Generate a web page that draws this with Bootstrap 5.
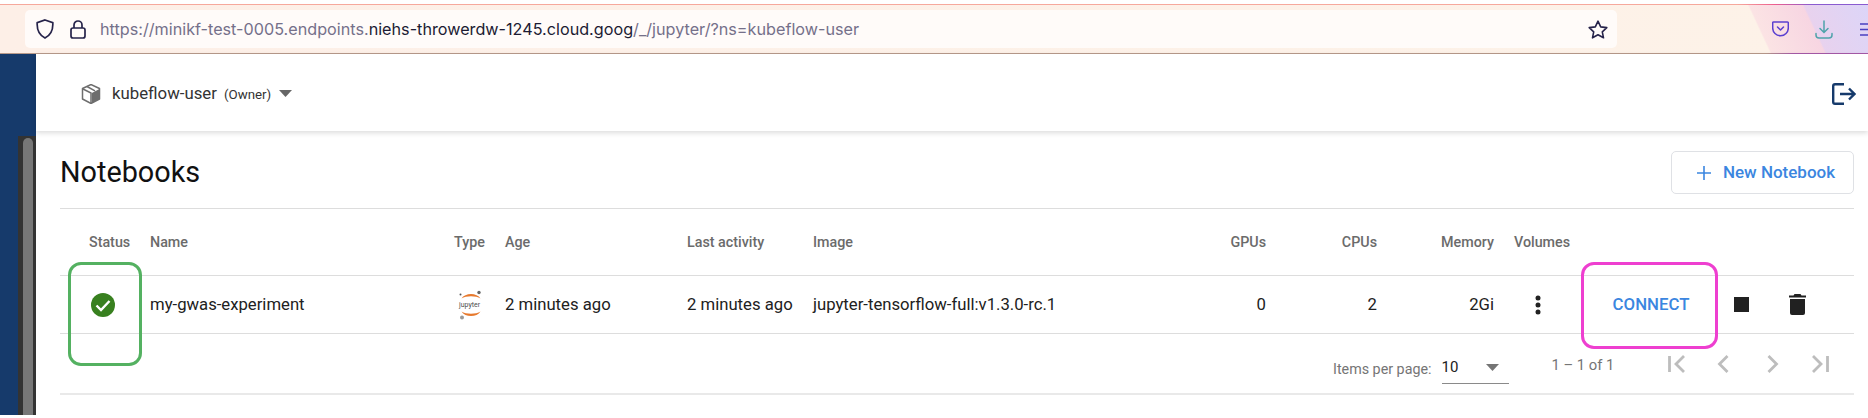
<!DOCTYPE html>
<html lang="en">
<head>
    <meta charset="UTF-8">
    <title>Notebooks</title>
    <link href="https://cdn.jsdelivr.net/npm/bootstrap@5.3.3/dist/css/bootstrap.min.css" rel="stylesheet">
    <style>
        html, body { height: 418px; overflow: hidden; background: #fff; }
        body { font-family: Roboto, "Liberation Sans", sans-serif; color: #212121; }
        .page-wrap { position: relative; width: 1868px; height: 418px; padding: 4px 0 3px; }

        /* browser chrome */
        .browser-bar {
            height: 50px; padding: 5px 0 5px 25px;
            background:
                linear-gradient(90deg, #f6a89c 0, #f6a89c 93%, #ee5f8f 95%, #8a5bd0 97%, #8a5bd0 100%) top / 100% 1px no-repeat,
                linear-gradient(90deg, #b89a8b 0, #b89a8b 94.5%, #a65aa8 96%, #a65aa8 100%) bottom / 100% 1px no-repeat,
                linear-gradient(65deg, transparent 0, transparent 96.5%, #e8d2ee 96.6%, #dcd5f8 100%),
                linear-gradient(65deg, transparent 0, transparent 93.6%, #fbe3e4 93.7%, #f7d5e2 96.6%),
                linear-gradient(90deg, #fdefe7 0, #fdf2e8 100%);
        }
        .url-box { width: 1592px; height: 38px; background: #fffbf9; border-radius: 5px; padding: 0 9px 0 11px; }
        .url-text { font-family: Inter, "Noto Sans", sans-serif; font-size: 16.2px; color: #75708a; margin-left: 14px; white-space: nowrap; }
        .url-text b { font-weight: 400; color: #1c1b33; }
        .chrome-icons { margin-left: 155px; gap: 26px; }
        .menu-icon { margin-left: 1px; }

        /* sidebar + main */
        .app-body { height: 361px; }
        .side-rail { width: 36px; flex: none; background: #163a6b; padding: 82px 0 0 18px; }
        .side-scroll { height: 100%; background: #333; padding: 2px 3px 0 5px; }
        .side-thumb { height: 100%; background: #777; border-radius: 5px 5px 0 0; }
        .main-col { flex: 1 1 auto; min-width: 0; }

        .top-head { height: 77px; padding: 2px 12px 0 45px; box-shadow: 0 2px 5px rgba(0,0,0,.14); position: relative; }
        .ns-name { font-size: 16.8px; color: #333; margin-left: 11px; }
        .ns-role { font-size: 13.3px; color: #333; margin-left: 7px; margin-top: 2px; }

        .content-area { padding: 0 14px 0 24px; }
        .title-row { height: 78px; padding-top: 6px; border-bottom: 1px solid #ddd; }
        .title-row h1 { font-family: Roboto, sans-serif; font-size: 28.8px; font-weight: 400; color: #111; margin: 0; }
        .new-btn { width: 183px; height: 43px; font-size: 17px; font-weight: 500; color: #3b86e0; border: 1px solid #dfe1e5; border-radius: 5px; background: #fff; gap: 12px; padding: 0 0 0 7px; }

        .nb-table { table-layout: fixed; width: 1794px; margin: 0; }
        .nb-table th, .nb-table td { padding: 0; border-bottom: 1px solid #ddd; vertical-align: middle; box-shadow: none; white-space: nowrap; }
        .nb-table th { height: 66px; padding-top: 2px; font-size: 14.3px; font-weight: 500; color: #6b6b6b; }
        .nb-table td { height: 58px; padding-top: 1px; font-size: 16.7px; color: #212121; }
        .c-status { width: 90px; } .c-name { width: 304px; } .c-type { width: 51px; } .c-age { width: 182px; }
        .c-last { width: 126px; } .c-image { width: 401px; } .c-gpu { width: 52px; } .c-cpu { width: 111px; }
        .c-mem { width: 117px; } .c-vol { width: 90px; }
        .status-head { padding-left: 29px !important; }
        .status-cell { padding-left: 31px !important; }
        .vol-head { padding-left: 20px !important; }
        .vol-cell { padding-left: 41px !important; }
        .connect-btn { width: 134px; margin-left: 0; padding: 0; border: 0; font-size: 16.8px; font-weight: 500; color: #3b86e0; background: none; }
        .act-stop { margin-left: 16px; }
        .act-trash { margin-left: 40px; }

        .pager-row { height: 61px; border-bottom: 2px solid #e9e9e9; padding-bottom: 0; }
        .per-label { font-size: 14.3px; color: #757575; margin-left: 1273px; margin-top: 13px; }
        .per-select { width: 67px; height: 32px; margin-left: 10px; margin-top: 9px; border-bottom: 1px solid #8a8a8a; font-size: 15px; color: #212121; padding: 0 10px 0 0; }
        .range-text { font-size: 14.8px; color: #757575; margin-left: 43px; width: 116px; margin-top: 4px; }
        .pager-btn { width: 18px; height: 20px; padding: 0; border: 0; background: none; display: flex; margin-top: 2px; }
        .pg-2 { margin-left: 31px; } .pg-3 { margin-left: 31px; } .pg-4 { margin-left: 27px; }

        /* hand drawn annotation boxes */
        .note-box { position: absolute; border-style: solid; border-width: 3px; border-radius: 13px; pointer-events: none; }
        .note-green { left: 68px; top: 262px; width: 74px; height: 104px; border-color: #54b161; }
        .note-pink { left: 1581px; top: 262px; width: 137px; height: 87px; border-color: #ee3fd0; }
        .jup-text { font-family: Roboto, sans-serif; font-size: 7px; fill: #4e4e4e; }
    </style>
</head>
<body>
<div class="page-wrap">

    <!-- browser toolbar -->
    <div class="browser-bar d-flex align-items-center">
        <div class="url-box d-flex align-items-center flex-shrink-0">
            <svg width="18" height="20" viewBox="0 0 18 20" fill="none" stroke="#26234a" stroke-width="1.7"><path d="M9 1 16.8 3.6C17.2 10 15 16 9 19 3 16 .8 10 1.2 3.6Z"/></svg>
            <svg class="ms-3" width="16" height="19" viewBox="0 0 16 19" fill="none" stroke="#26234a" stroke-width="1.7"><rect x="1" y="8" width="14" height="10" rx="2"/><path d="M4 8V5a4 4 0 0 1 8 0v3"/></svg>
            <span class="url-text">https://minikf-test-0005.endpoints.<b>niehs-throwerdw-1245.cloud.goog</b>/_/jupyter/?ns=kubeflow-user</span>
            <svg class="ms-auto" width="20" height="19" viewBox="0 0 20 19" fill="none" stroke="#26234a" stroke-width="1.6" stroke-linejoin="round"><path d="M10 1.2 12.7 6.9 18.8 7.6 14.3 11.8 15.5 17.8 10 14.8 4.5 17.8 5.7 11.8 1.2 7.6 7.3 6.9Z"/></svg>
        </div>
        <div class="chrome-icons d-flex align-items-center flex-shrink-0">
            <svg width="17" height="16" viewBox="0 0 17 16" fill="none" stroke="#5b3fd0" stroke-width="1.5" stroke-linecap="round" stroke-linejoin="round"><path d="M1.5 1h14a.8.8 0 0 1 .8.8V7a7.8 7.8 0 0 1-15.6 0V1.800a.8.8 0 0 1 .8-.8Z"/><path d="M5.500 6 8.500 9 11.500 6"/></svg>
            <svg width="18" height="19" viewBox="0 0 18 19" fill="none" stroke="#4fa3ab" stroke-width="1.500" stroke-linecap="round"><path d="M9 1v11M5 8.500 9 12.500 13 8.500"/><path d="M1 13.500V15a3 3 0 0 0 3 3h10a3 3 0 0 0 3-3v-1.500" /></svg>
            <svg class="menu-icon" width="8" height="13" viewBox="0 0 8 13" stroke="#4a3fc0" stroke-width="1.600"><path d="M0 1h8M0 6.500h8M0 12h8"/></svg>
        </div>
    </div>

    <div class="app-body d-flex">
        <div class="side-rail"><div class="side-scroll"><div class="side-thumb"></div></div></div>

        <div class="main-col">
            <!-- namespace header -->
            <div class="top-head d-flex align-items-center">
                <svg width="20" height="20" viewBox="0 0 20 20"><path d="M10 .5 18.500 4.500V15L10 19.500 1.500 15V4.500Z" fill="#fff" stroke="#6e6e6e" stroke-width="1.500" stroke-linejoin="round"/><path d="M10.800 9 18.500 5V15L10.800 19Z" fill="#6e6e6e"/><path d="M2 5 10 9V19M6 2.500 14 6.800" fill="none" stroke="#6e6e6e" stroke-width="1.500"/></svg>
                <span class="ns-name">kubeflow-user</span>
                <span class="ns-role">(Owner)</span>
                <svg class="ms-2" width="13" height="7" viewBox="0 0 13 7"><path d="M0 0h13L6.500 7Z" fill="#666"/></svg>
                <svg class="ms-auto" width="24" height="22" viewBox="0 0 24 22" fill="none" stroke="#163a6b" stroke-width="2.400"><path d="M12 1.200H3a1.800 1.800 0 0 0-1.800 1.800V19A1.800 1.800 0 0 0 3 20.800h9"/><path d="M8 11h15M17 5.500 22.500 11 17 16.500"/></svg>
            </div>

            <div class="content-area">
                <div class="title-row d-flex align-items-center justify-content-between">
                    <h1>Notebooks</h1>
                    <button class="btn new-btn d-flex align-items-center justify-content-center" type="button">
                        <svg width="14" height="14" viewBox="0 0 14 14" stroke="#3b86e0" stroke-width="1.600"><path d="M7 0v14M0 7h14"/></svg>
                        New Notebook
                    </button>
                </div>

                <table class="table nb-table">
                    <colgroup>
                        <col class="c-status"><col class="c-name"><col class="c-type"><col class="c-age"><col class="c-last">
                        <col class="c-image"><col class="c-gpu"><col class="c-cpu"><col class="c-mem"><col class="c-vol"><col>
                    </colgroup>
                    <thead>
                        <tr>
                            <th class="status-head">Status</th><th>Name</th><th>Type</th><th>Age</th><th>Last activity</th><th>Image</th>
                            <th class="text-end">GPUs</th><th class="text-end">CPUs</th><th class="text-end">Memory</th><th class="vol-head">Volumes</th><th></th>
                        </tr>
                    </thead>
                    <tbody>
                        <tr>
                            <td class="status-cell">
                                <svg class="d-block" width="24" height="24" viewBox="0 0 24 24"><circle cx="12" cy="12" r="12" fill="#38801f"/><path d="M5.500 12.500 10 17 18.500 8" fill="none" stroke="#fff" stroke-width="2.400"/></svg>
                            </td>
                            <td>my-gwas-experiment</td>
                            <td>
                                <svg class="d-block ms-1" width="26" height="30" viewBox="0 0 26 30">
                                    <path d="M3.500 8.500C7 2.500 19 2.500 22.500 8.500 18 5.500 8 5.500 3.500 8.500Z" fill="#e7792d"/>
                                    <path d="M3.500 21.500C7 27.500 19 27.500 22.500 21.500 18 24.500 8 24.500 3.500 21.500Z" fill="#e7792d"/>
                                    <text class="jup-text" x="1" y="17">jupyter</text>
                                    <circle cx="21" cy="2.500" r="1.700" fill="#666"/><circle cx="2.500" cy="4.500" r="1" fill="#555"/><circle cx="4" cy="27.500" r="2" fill="#999"/>
                                </svg>
                            </td>
                            <td>2 minutes ago</td><td>2 minutes ago</td><td>jupyter-tensorflow-full:v1.3.0-rc.1</td>
                            <td class="text-end">0</td><td class="text-end">2</td><td class="text-end">2Gi</td>
                            <td class="vol-cell"><svg class="d-block" width="6" height="20" viewBox="0 0 6 20" fill="#222"><circle cx="3" cy="3" r="2.500"/><circle cx="3" cy="10" r="2.500"/><circle cx="3" cy="17" r="2.500"/></svg></td>
                            <td>
                                <div class="d-flex align-items-center">
                                    <button class="btn connect-btn" type="button">CONNECT</button>
                                    <svg class="act-stop" width="15" height="15" viewBox="0 0 15 15"><rect width="15" height="15" fill="#212121"/></svg>
                                    <svg class="act-trash" width="17" height="21" viewBox="0 0 17 21" fill="#212121"><path d="M5.500 0h6l1 1.500H17V3.500H0V1.500H4.500Z"/><path d="M1 5h15V19a2 2 0 0 1-2 2H3a2 2 0 0 1-2-2Z"/></svg>
                                </div>
                            </td>
                        </tr>
                    </tbody>
                </table>

                <div class="pager-row d-flex align-items-center">
                    <span class="per-label">Items per page:</span>
                    <div class="per-select d-flex align-items-center justify-content-between">
                        <span>10</span>
                        <svg width="13" height="7" viewBox="0 0 13 7"><path d="M0 0h13L6.500 7Z" fill="#757575"/></svg>
                    </div>
                    <span class="range-text">1 – 1 of 1</span>
                    <button class="pager-btn" type="button"><svg width="18" height="20" viewBox="0 0 18 20" fill="none" stroke="#bdbdbd" stroke-width="2.800"><path d="M1.500 2v16M16 2 8 10 16 18"/></svg></button>
                    <button class="pager-btn pg-2" type="button"><svg width="13" height="20" viewBox="0 0 13 20" fill="none" stroke="#bdbdbd" stroke-width="2.800"><path d="M10.500 2 2.500 10 10.500 18"/></svg></button>
                    <button class="pager-btn pg-3" type="button"><svg width="13" height="20" viewBox="0 0 13 20" fill="none" stroke="#bdbdbd" stroke-width="2.800"><path d="M2.500 2 10.500 10 2.500 18"/></svg></button>
                    <button class="pager-btn pg-4" type="button"><svg width="18" height="20" viewBox="0 0 18 20" fill="none" stroke="#bdbdbd" stroke-width="2.800"><path d="M16.500 2v16M2 2 10 10 2 18"/></svg></button>
                </div>
            </div>
        </div>
    </div>

    <!-- annotation rectangles sitting over the table -->
    <div class="note-box note-green"></div>
    <div class="note-box note-pink"></div>
</div>
<script src="https://cdn.jsdelivr.net/npm/bootstrap@5.3.3/dist/js/bootstrap.bundle.min.js"></script>
</body>
</html>
